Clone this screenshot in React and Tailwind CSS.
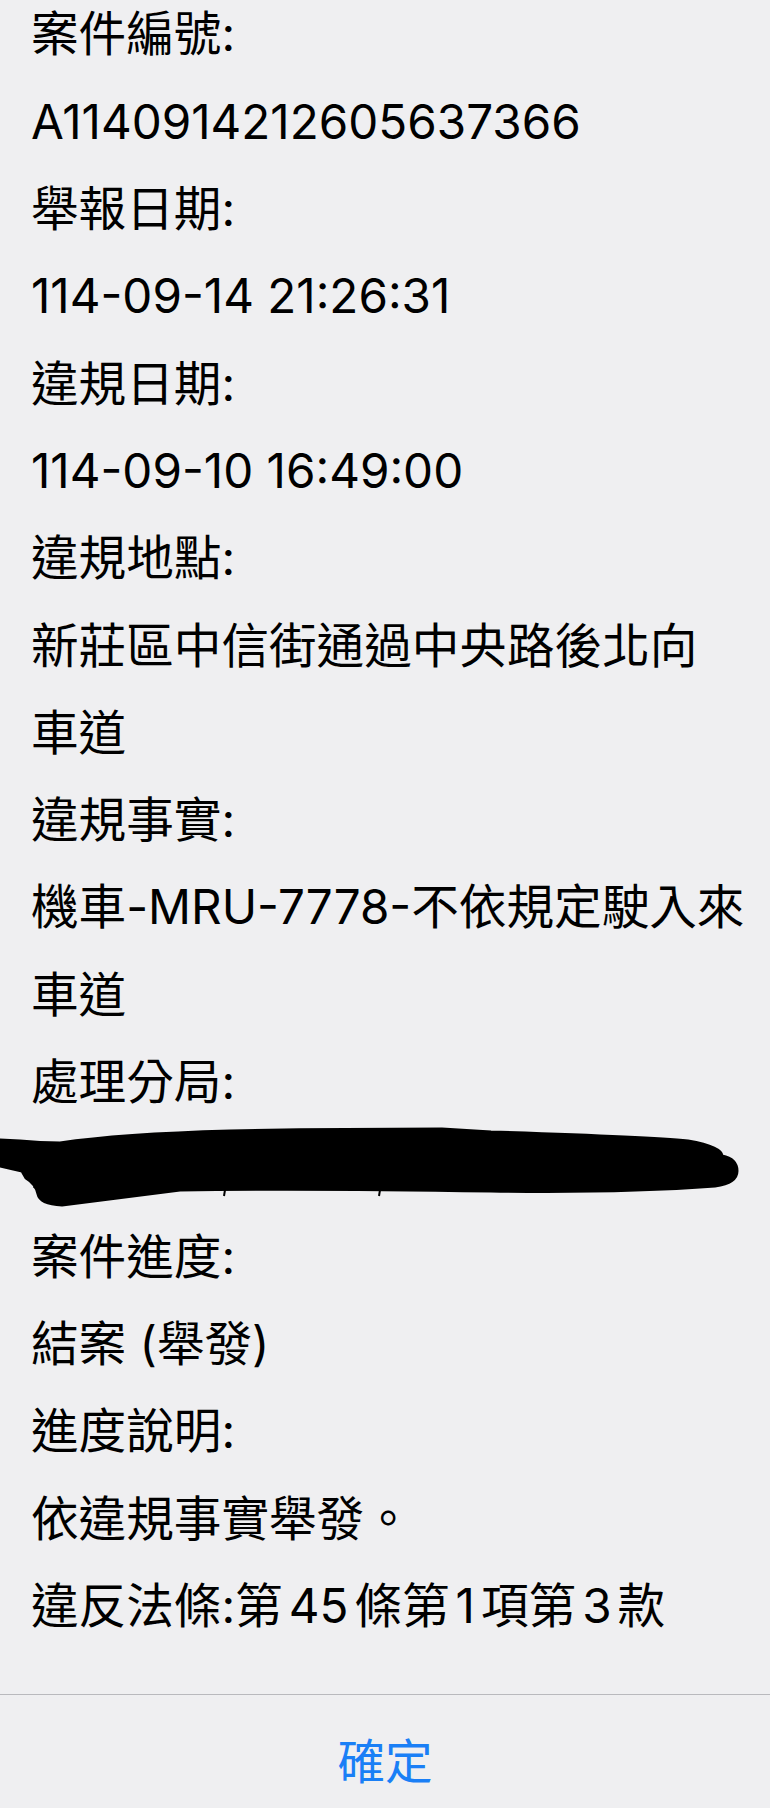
import React from 'react';

const Num = ({ children }) => <span className="mx-[6px]">{children}</span>;

const rows = [
  '案件編號:',
  'A114091421260563 7366'.replace(' ', ''),
  '舉報日期:',
  '114-09-14 21:26:31',
  '違規日期:',
  '114-09-10 16:49:00',
  '違規地點:',
  '新莊區中信街通過中央路後北向',
  '車道',
  '違規事實:',
  '機車-MRU-7778-不依規定駛入來',
  '車道',
  '處理分局:',
  null,
  '案件進度:',
  '結案 (舉發)',
  '進度說明:',
  '依違規事實舉發。',
  <>違反法條:第<Num>45</Num>條第<Num>1</Num>項第<Num>3</Num>款</>,
];

const Line = ({ text }) => (
  <div className="h-[87.33px] pl-[31px] flex items-center whitespace-nowrap text-[47.6px] leading-none text-black">
    {text}
  </div>
);

// hand-drawn black marker over the redacted station name
const Redaction = () => (
  <div className="h-[87.33px]">
    <svg width="770" height="88" viewBox="0 0 770 88" className="block">
      <path
        d="M0,14 L20,15 Q40,17 60,17 Q120,8 230,5 Q330,3 442,3 L491,6 Q648,11 688,15 Q722,21 722,30 Q737,33 737,45 Q737,57 715,60 Q619,67 491,65 Q300,62 180,64 Q100,74 62,79 Q40,78 38,68 Q36,58 26,52 L22,45 L0,40 Z"
        fill="#000"
        stroke="#000"
        strokeWidth="3"
        strokeLinejoin="round"
      />
      <path d="M38,53 L34,62 M225,64 L224,70 M380,64 L379,70" stroke="#000" strokeWidth="2" />
    </svg>
  </div>
);

export default function App() {
  return (
    <div className="h-[1808px] overflow-hidden bg-[#efeff1] flex flex-col font-['Inter','Noto_Sans_CJK_TC',sans-serif]">
      <div className="-mt-[9.67px] shrink-0">
        {rows.map((r, i) => (r === null ? <Redaction key={i} /> : <Line key={i} text={r} />))}
      </div>
      <div className="mt-[44px] h-px shrink-0 bg-[#b9b9bd]" />
      <div className="h-[134px] shrink-0 flex items-center justify-center">
        <span className="text-[47.6px] leading-none text-[#1a7ff6]">確定</span>
      </div>
    </div>
  );
}
